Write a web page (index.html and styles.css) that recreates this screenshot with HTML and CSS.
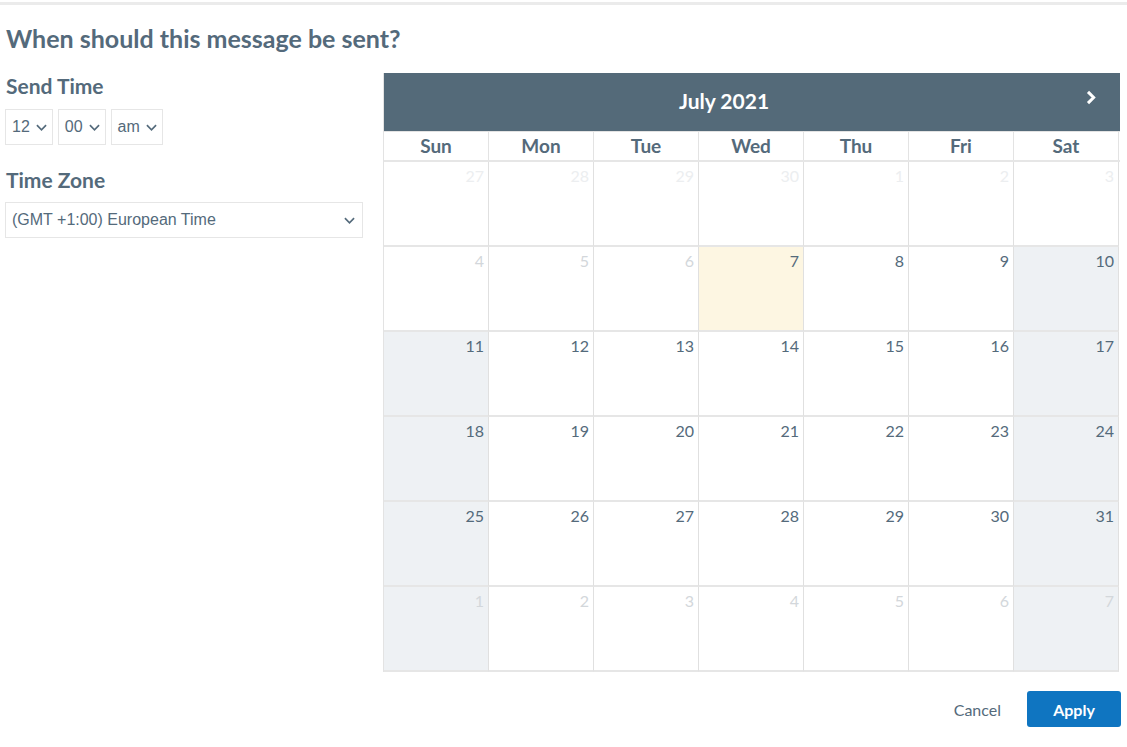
FILE: index.html
```html
<!DOCTYPE html>
<html lang="en">
<head>
    <meta charset="UTF-8">
    <title>Schedule Message</title>
    <link rel="stylesheet" href="styles.css">
</head>
<body>
    <div class="topline"></div>

    <div class="page">
        <h1>When should this message be sent?</h1>

        <div class="content">
            <div class="options">
                <h2>Send Time</h2>
                <div class="time-row">
                    <div class="select small">12 <svg viewBox="0 0 12 7"><path d="M1 1l5 5 5-5"/></svg></div>
                    <div class="select small">00 <svg viewBox="0 0 12 7"><path d="M1 1l5 5 5-5"/></svg></div>
                    <div class="select small">am <svg viewBox="0 0 12 7"><path d="M1 1l5 5 5-5"/></svg></div>
                </div>

                <h2 class="zone-title">Time Zone</h2>
                <div class="select wide">(GMT +1:00) European Time <svg viewBox="0 0 12 7"><path d="M1 1l5 5 5-5"/></svg></div>
            </div>

            <div class="calendar">
                <div class="cal-head">
                    <span class="month">July 2021</span>
                    <svg class="next" viewBox="0 0 8 12"><path d="M2 1.5l4.5 4.5-4.5 4.5"/></svg>
                </div>
                <div class="weekdays">
                    <div>Sun</div><div>Mon</div><div>Tue</div><div>Wed</div><div>Thu</div><div>Fri</div><div>Sat</div>
                </div>
                <div class="days" id="days"></div>
            </div>
        </div>

        <div class="actions">
            <button class="cancel">Cancel</button>
            <button class="apply">Apply</button>
        </div>
    </div>

    <script>
        // Kalender fuer Juli 2021 aufbauen
        const days = [27, 28, 29, 30, 1, 2, 3];
        for (let d = 4; d <= 31; d++) days.push(d);
        for (let d = 1; d <= 7; d++) days.push(d);

        const grid = document.getElementById('days');
        days.forEach((day, i) => {
            const cell = document.createElement('div');
            cell.className = 'day';
            const col = i % 7;
            // vergangene Tage und Tage ausserhalb des Monats
            if (i < 7) cell.classList.add('faint');
            else if (i < 10 || i >= 35) cell.classList.add('muted');
            if ((col === 0 || col === 6) && i >= 10) cell.classList.add('weekend');
            if (i === 10) cell.classList.add('today');
            cell.innerHTML = '<span>' + day + '</span>';
            grid.appendChild(cell);
        });
    </script>
</body>
</html>
```

FILE: styles.css
```css
/* Allgemeine Stile */
body {
    margin: 0;
    font-family: Lato, "Open Sans", sans-serif;
    color: #546a7b;
    background-color: #fff;
}

.topline {
    height: 3px;
    margin-top: 2px;
    background-color: #ebebeb;
}

.page {
    padding: 0 6px 0 5px;
}

h1 {
    margin: 18px 0 20px 1px;
    font-size: 25px;
    font-weight: 700;
    line-height: 30px;
}

h2 {
    margin: 0 0 10px 1px;
    font-size: 21px;
    font-weight: 700;
    line-height: 26px;
}

.content {
    display: flex;
    gap: 20px;
}

.options {
    width: 358px;
}

.time-row {
    display: flex;
    gap: 5px;
}

.select {
    display: flex;
    align-items: center;
    justify-content: space-between;
    box-sizing: border-box;
    height: 36px;
    border: 1px solid #e6e6e6;
    font-family: "Liberation Sans", Arial, sans-serif;
    font-size: 16px;
    color: #546a7b;
}

.select svg {
    width: 11px;
    height: 7px;
    fill: none;
    stroke: #546a7b;
    stroke-width: 1.8;
}

.select.small {
    padding: 0 5px 0 6px;
    gap: 6px;
}

.select.wide {
    width: 358px;
    padding: 0 7px 0 6px;
}

.zone-title {
    margin-top: 22px;
    margin-bottom: 9px;
}

.calendar {
    width: 736px;
    border-left: 1px solid #e3e3e3;
}

.cal-head {
    position: relative;
    height: 58px;
    display: flex;
    align-items: center;
    justify-content: center;
    padding-right: 56px;
    padding-bottom: 3px;
    box-sizing: border-box;
    background-color: #546a79;
    color: #fff;
}

.month {
    font-size: 21px;
    font-weight: 700;
}

.next {
    position: absolute;
    right: 24px;
    top: 17px;
    width: 11px;
    height: 15px;
    fill: none;
    stroke: #fff;
    stroke-width: 2.4;
}

.weekdays {
    display: grid;
    grid-template-columns: repeat(7, 105px);
    border-bottom: 2px solid #e6e6e6;
    border-top: 1px solid #e3e3e3;
}

.weekdays div {
    height: 28px;
    line-height: 28px;
    text-align: center;
    font-size: 19px;
    font-weight: 700;
    border-right: 1px solid #e3e3e3;
}

.days {
    display: grid;
    grid-template-columns: repeat(7, 105px);
    grid-auto-rows: 85px;
}

.day {
    box-sizing: border-box;
    border-right: 1px solid #e0e0e0;
    border-bottom: 2px solid #e6e6e6;
    text-align: right;
    padding: 4px 4px 0 0;
    font-size: 16px;
    color: #546a7b;
}

.day.weekend {
    background-color: #eef1f4;
}

.day.today {
    background-color: #fdf6e2;
}

.day.faint {
    color: #eceef0;
}

.day.muted {
    color: #d3d7db;
}

.actions {
    display: flex;
    justify-content: flex-end;
    align-items: center;
    gap: 26px;
    margin-top: 19px;
}

button {
    font-family: Lato, "Open Sans", sans-serif;
    font-size: 16px;
    cursor: pointer;
}

.cancel {
    border: none;
    background: none;
    color: #546a7b;
    padding: 0;
}

.apply {
    width: 94px;
    height: 36px;
    border: none;
    border-radius: 3px;
    background-color: #0f75c1;
    color: #fff;
    font-weight: 700;
}
```
